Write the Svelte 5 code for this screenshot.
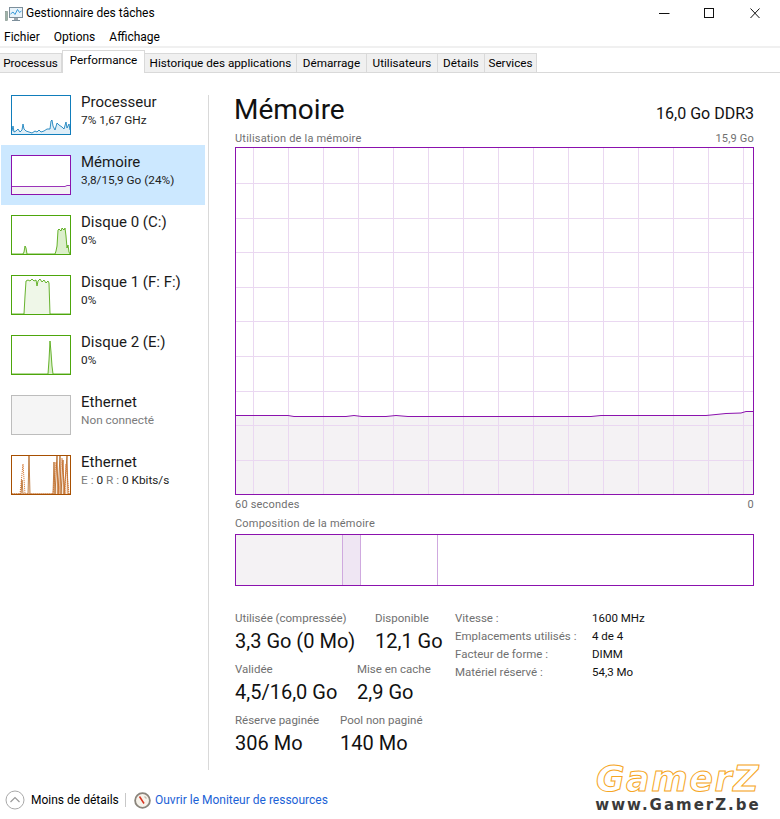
<script>
	const tabs = ['Processus', 'Performance', 'Historique des applications', 'Démarrage', 'Utilisateurs', 'Détails', 'Services'];

	// thumbnails: x,y pairs inside a 58x38 plot
	const items = [
		{ name: 'Processeur', sub: '7%  1,67 GHz', stroke: '#117dbb', fill: '#dfeef7', line: [[0,35],[1,30],[2,36],[4,35],[6,33],[8,36],[10,34],[11,28],[12,33],[14,35],[17,36],[20,37],[23,35],[25,36],[27,34],[29,36],[32,35],[35,33],[38,33],[39,25],[40,24],[41,30],[43,34],[45,27],[47,29],[50,31],[52,33],[54,26],[55,32],[57,28],[58,34]] },
		{ name: 'Mémoire', sub: '3,8/15,9 Go (24%)', stroke: '#8b12ae', fill: '#f4f2f4', line: [[0,30.5],[53,30.5],[55,29.5],[58,29.5]] },
		{ name: 'Disque 0 (C:)', sub: '0%', stroke: '#4da60c', fill: '#dcefcc', line: [[0,38],[11,38],[12,36],[13,30],[14,32],[15,38],[43,38],[44,35],[45,30],[46,14],[47,13],[49,15],[50,12],[52,14],[53,12],[54,20],[55,32],[56,29],[57,36],[58,38]] },
		{ name: 'Disque 1 (F: F:)', sub: '0%', stroke: '#4da60c', fill: '#eff7e8', line: [[0,38],[12,38],[13,20],[14,5],[16,4],[18,5],[20,3],[22,5],[24,4],[25,10],[26,5],[28,3],[30,6],[32,4],[34,7],[36,5],[37,7],[38,38],[58,38]] },
		{ name: 'Disque 2 (E:)', sub: '0%', stroke: '#4da60c', fill: '#dcefcc', line: [[0,38],[36,38],[37,24],[38,5],[39,16],[40,30],[41,38],[58,38]] },
		{ name: 'Ethernet', sub: 'Non connecté', off: true },
		{ name: 'Ethernet', sub: 'E : 0 R : 0 Kbits/s', stroke: '#a74f01', fill: '#f8e8da', net: true, line: [[0,38],[9,38],[10,24],[11,38],[16,38],[17,0],[18,38],[41,38],[42,6],[43,38],[45,0],[46,38],[48,0],[49,38],[51,4],[52,38],[55,0],[56,38],[58,38]], line2: [[0,38],[8,38],[11,8],[13,38],[41,38],[44,6],[47,38],[50,2],[53,38],[54,8],[57,38]] }
	];

	function pts(l) {
		return l.map((p) => p.join(',')).join(' ');
	}

	function area(l) {
		return `0,38 ${pts(l)} 58,38`;
	}

	// main chart, coordinates are inside the 517x346 plot
	const vlines = Array.from({ length: 15 }, (_, i) => 16.8 + i * 35.05);
	const hlines = Array.from({ length: 9 }, (_, i) => 35 + i * 34.6);
	const usage = [[0,267.5],[52,267.5],[58,268.5],[110,268.5],[118,267.5],[126,268.5],[150,268.5],[160,267.5],[172,268.5],[355,268.5],[365,267.5],[470,267.5],[480,266.5],[490,265.5],[505,265],[510,263.5],[517,263.5]];
	const usageArea = `0,346 ${pts(usage)} 517,346`;

	const stats = [
		{ cols: 'first', a: ['Utilisée (compressée)', '3,3 Go (0 Mo)'], b: ['Disponible', '12,1 Go'] },
		{ cols: 'second', a: ['Validée', '4,5/16,0 Go'], b: ['Mise en cache', '2,9 Go'] },
		{ cols: 'third', a: ['Réserve paginée', '306 Mo'], b: ['Pool non paginé', '140 Mo'] }
	];

	const info = [
		['Vitesse :', '1600 MHz'],
		['Emplacements utilisés :', '4 de 4'],
		['Facteur de forme :', 'DIMM'],
		['Matériel réservé :', '54,3 Mo']
	];
</script>

<div class="window">
	<header class="titlebar">
		<svg class="appicon" width="18" height="16" viewBox="0 0 18 16">
			<rect x="0.5" y="5.5" width="2" height="9" fill="#9db4a8" stroke="#7c8a86" stroke-width="0.6" />
			<rect x="4.5" y="1.5" width="13" height="10" fill="#e8f3fa" stroke="#7d8f9b" />
			<polyline points="5.5,8 8,6 10,8.5 12.5,3.5 14.5,6.5 16.5,5" fill="none" stroke="#3a9ad9" stroke-width="1" />
			<rect x="9" y="12" width="4" height="2" fill="#9aa5ad" />
			<rect x="7" y="14" width="8" height="1" fill="#7d8f9b" />
		</svg>
		<span class="title">Gestionnaire des tâches</span>
		<div class="winbtns">
			<svg width="102" height="14" viewBox="0 0 102 14">
				<path d="M0 7.5h10.5" stroke="#111" fill="none" />
				<rect x="45.5" y="2.5" width="9" height="9" stroke="#111" fill="none" />
				<path d="M91.5 2.5l9 9.5M100.5 2.5l-9 9.5" stroke="#111" fill="none" />
			</svg>
		</div>
	</header>

	<nav class="menu">
		<span>Fichier</span>
		<span>Options</span>
		<span>Affichage</span>
	</nav>

	<div class="tabs">
		{#each tabs as t, i}
			<div class="tab" class:active={i === 1}>{t}</div>
		{/each}
	</div>

	<div class="body">
		<aside class="side">
			{#each items as it, i}
				<div class="item" class:sel={i === 1}>
					<div class="thumb" class:off={it.off} style={it.off ? '' : `border-color:${it.stroke}`}>
						{#if !it.off}
							<svg width="58" height="38" viewBox="0 0 58 38">
								<polygon points={area(it.line)} fill={it.fill} />
								<polyline points={pts(it.line)} fill="none" stroke={it.stroke} stroke-width="1" opacity={it.net ? 0.7 : 0.85} />
								{#if it.net}
									<polyline points={pts(it.line2)} fill="none" stroke="#d2691e" stroke-width="1" stroke-dasharray="1 1" />
								{/if}
							</svg>
						{/if}
					</div>
					<div class="itemtext">
						<div class="itemname">{it.name}</div>
						<div class="itemsub" class:muted={it.off}>
							{#if it.net}<span class="muted">E :</span> 0 <span class="muted">R :</span> 0 Kbits/s{:else}{it.sub}{/if}
						</div>
					</div>
				</div>
			{/each}
		</aside>

		<main class="main">
			<div class="head">
				<h1>Mémoire</h1>
				<span class="spec">16,0 Go DDR3</span>
			</div>

			<div class="caption top">
				<span>Utilisation de la mémoire</span>
				<span>15,9 Go</span>
			</div>
			<div class="chart">
				<svg width="517" height="346" viewBox="0 0 517 346">
					<polygon points={usageArea} fill="#f4f2f4" />
					{#each vlines as x}
						<line x1={Math.round(x) + 0.5} x2={Math.round(x) + 0.5} y1="0" y2="346" stroke="#ead8f1" />
					{/each}
					{#each hlines as y}
						<line x1="0" x2="517" y1={Math.round(y) + 0.5} y2={Math.round(y) + 0.5} stroke="#ead8f1" />
					{/each}
					<polyline points={pts(usage)} fill="none" stroke="#8b12ae" stroke-width="1" />
				</svg>
			</div>
			<div class="caption bottom">
				<span>60 secondes</span>
				<span>0</span>
			</div>

			<div class="caption comp">Composition de la mémoire</div>
			<div class="bar">
				<div class="seg used"></div>
				<div class="seg modified"></div>
				<div class="seg standby"></div>
				<div class="seg free"></div>
			</div>

			<div class="details">
				<div class="stats">
					{#each stats as s}
						<div class="statrow {s.cols}">
							<div>
								<div class="label">{s.a[0]}</div>
								<div class="value">{s.a[1]}</div>
							</div>
							<div>
								<div class="label">{s.b[0]}</div>
								<div class="value">{s.b[1]}</div>
							</div>
						</div>
					{/each}
				</div>
				<dl class="info">
					{#each info as row}
						<dt>{row[0]}</dt>
						<dd>{row[1]}</dd>
					{/each}
				</dl>
			</div>
		</main>
	</div>

	<footer class="footer">
		<svg class="chev" width="20" height="20" viewBox="0 0 20 20">
			<circle cx="10" cy="10" r="9" fill="none" stroke="#a9a9a9" />
			<path d="M5.5 12l4.5-4.5 4.5 4.5" fill="none" stroke="#9a9a9a" stroke-width="1.2" />
		</svg>
		<span class="less">Moins de détails</span>
		<span class="sep"></span>
		<svg class="gauge" width="17" height="17" viewBox="0 0 17 17">
			<circle cx="8.5" cy="8.5" r="7.4" fill="#f6f2ea" stroke="#8a857c" stroke-width="1.8" />
			<path d="M5.5 4.5l4.5 7" stroke="#d8321e" stroke-width="1.5" fill="none" />
			<path d="M10.5 4.5l2 2" stroke="#c2bcae" stroke-width="1.2" fill="none" />
		</svg>
		<span class="link">Ouvrir le Moniteur de ressources</span>
	</footer>

	<div class="watermark">
		<div class="wm-logo">GamerZ</div>
		<div class="wm-url">www.GamerZ.be</div>
	</div>
</div>

<style>
	:global(body) {
		background: #fff;
	}

	.window {
		position: relative;
		width: 780px;
		height: 819px;
		overflow: hidden;
		background: #fff;
		color: #000;
		font-family: Roboto, 'Noto Sans', sans-serif;
		font-size: 12px;
	}

	.titlebar {
		display: flex;
		align-items: center;
		height: 27px;
		padding-left: 5px;
	}

	.appicon {
		margin-right: 3px;
	}

	.title {
		font-size: 12px;
		margin-top: -1px;
	}

	.winbtns {
		margin-left: auto;
		margin-right: 19px;
		display: flex;
		margin-top: -1px;
	}

	.menu {
		display: flex;
		gap: 14px;
		align-items: center;
		height: 18px;
		padding: 1px 0 0 4px;
		border-bottom: 2px solid #f0f0f0;
	}

	.tabs {
		display: grid;
		grid-template-columns: 62px 83px 152px 70px 71px 47px 52px;
		align-items: end;
		height: 24px;
		border-bottom: 1px solid #d9d9d9;
		font-size: 11.7px;
	}

	.tab {
		height: 19px;
		line-height: 18px;
		text-align: center;
		background: #f0f0f0;
		border: 1px solid #d9d9d9;
		border-bottom: 0;
		border-left-width: 0;
		box-sizing: border-box;
		white-space: nowrap;
	}

	.tab.active {
		position: relative;
		height: 23px;
		line-height: 19px;
		background: #fff;
		border-left-width: 1px;
		margin-bottom: -1px;
	}

	.body {
		display: flex;
		height: 698px;
	}

	.side {
		width: 208px;
		padding-top: 12px;
		box-sizing: border-box;
		flex: none;
	}

	.item {
		display: flex;
		gap: 10px;
		height: 60px;
		width: 204px;
		margin-left: 1px;
		padding: 10px 0 0 10px;
		box-sizing: border-box;
	}

	.item.sel {
		background: #cce8ff;
	}

	.thumb {
		width: 60px;
		height: 40px;
		border: 1px solid;
		box-sizing: border-box;
		background: #fff;
		flex: none;
	}

	.thumb svg {
		display: block;
	}

	.thumb.off {
		background: #f5f5f5;
		border-color: #bdbdbd;
	}

	.itemname {
		font-size: 15px;
		line-height: 17px;
		margin-top: -1px;
		color: #1a1a1a;
	}

	.itemsub {
		font-size: 11.8px;
		line-height: 16px;
		margin-top: 1px;
		white-space: nowrap;
		color: #222;
	}

	.muted {
		color: #7b7b7b;
	}

	.main {
		width: 546px;
		height: 675px;
		margin-top: 22px;
		padding-left: 26px;
		box-sizing: border-box;
		border-left: 1px solid #d9d9d9;
	}

	.head {
		display: flex;
		justify-content: space-between;
		align-items: baseline;
		height: 33px;
		margin-left: -1px;
	}

	h1 {
		margin: 0;
		font-size: 28px;
		font-weight: 400;
		line-height: 30px;
		color: #111;
	}

	.spec {
		font-size: 16px;
		color: #111;
	}

	.caption {
		display: flex;
		justify-content: space-between;
		font-size: 11px;
		line-height: 16px;
		color: #707070;
		letter-spacing: 0.2px;
	}

	.caption.top {
		margin-top: 3px;
	}

	.caption.bottom {
		margin-top: 2px;
	}

	.caption.comp {
		margin-top: 3px;
		margin-bottom: 2px;
	}

	.chart {
		width: 519px;
		height: 348px;
		border: 1px solid #8b12ae;
		box-sizing: border-box;
	}

	.chart svg {
		display: block;
	}

	.bar {
		display: flex;
		width: 519px;
		height: 52px;
		border: 1px solid #8b12ae;
		box-sizing: border-box;
	}

	.seg {
		border-right: 1px solid #cfa9df;
		box-sizing: border-box;
	}

	.used {
		width: 107px;
		background: #f4f2f4;
	}

	.modified {
		width: 18px;
		background: #efe6f3;
	}

	.standby {
		width: 77px;
	}

	.free {
		flex: 1;
		border-right: 0;
	}

	.details {
		display: flex;
		margin-top: 24px;
	}

	.stats {
		width: 220px;
		flex: none;
	}

	.statrow {
		display: grid;
		height: 51px;
		white-space: nowrap;
	}

	.first {
		grid-template-columns: 140px auto;
	}

	.second {
		grid-template-columns: 122px auto;
	}

	.third {
		grid-template-columns: 105px auto;
	}

	.label {
		font-size: 11.5px;
		line-height: 16px;
		color: #707070;
	}

	.value {
		font-size: 20px;
		line-height: 24px;
		margin-top: 3px;
		color: #111;
	}

	.info {
		display: grid;
		grid-template-columns: 137px auto;
		grid-auto-rows: 18px;
		margin: 0;
		font-size: 11.5px;
		line-height: 16px;
	}

	dt {
		color: #707070;
	}

	dd {
		margin: 0;
		color: #111;
	}

	.footer {
		display: flex;
		align-items: center;
		height: 49px;
		padding-left: 5px;
		padding-top: 9px;
		box-sizing: border-box;
	}

	.less {
		margin-left: 6px;
		width: 94px;
		white-space: nowrap;
	}

	.sep {
		width: 1px;
		height: 14px;
		background: #c8c8c8;
	}

	.gauge {
		margin-left: 8px;
	}

	.link {
		margin-left: 4px;
		color: #1b62d6;
		white-space: nowrap;
	}

	/* pasted over the screenshot corner */
	.watermark {
		position: absolute;
		right: 19px;
		top: 762px;
		width: 166px;
		font-family: 'DejaVu Sans', sans-serif;
		font-weight: 700;
		text-align: center;
	}

	.wm-logo {
		font-size: 35px;
		line-height: 34px;
		font-style: italic;
		letter-spacing: 1.5px;
		color: #fff;
		-webkit-text-stroke: 1px #f6a623;
		white-space: nowrap;
	}

	.wm-url {
		font-size: 15px;
		line-height: 15px;
		margin-top: 2px;
		letter-spacing: 2px;
		color: #3a3a3a;
		white-space: nowrap;
	}
</style>
